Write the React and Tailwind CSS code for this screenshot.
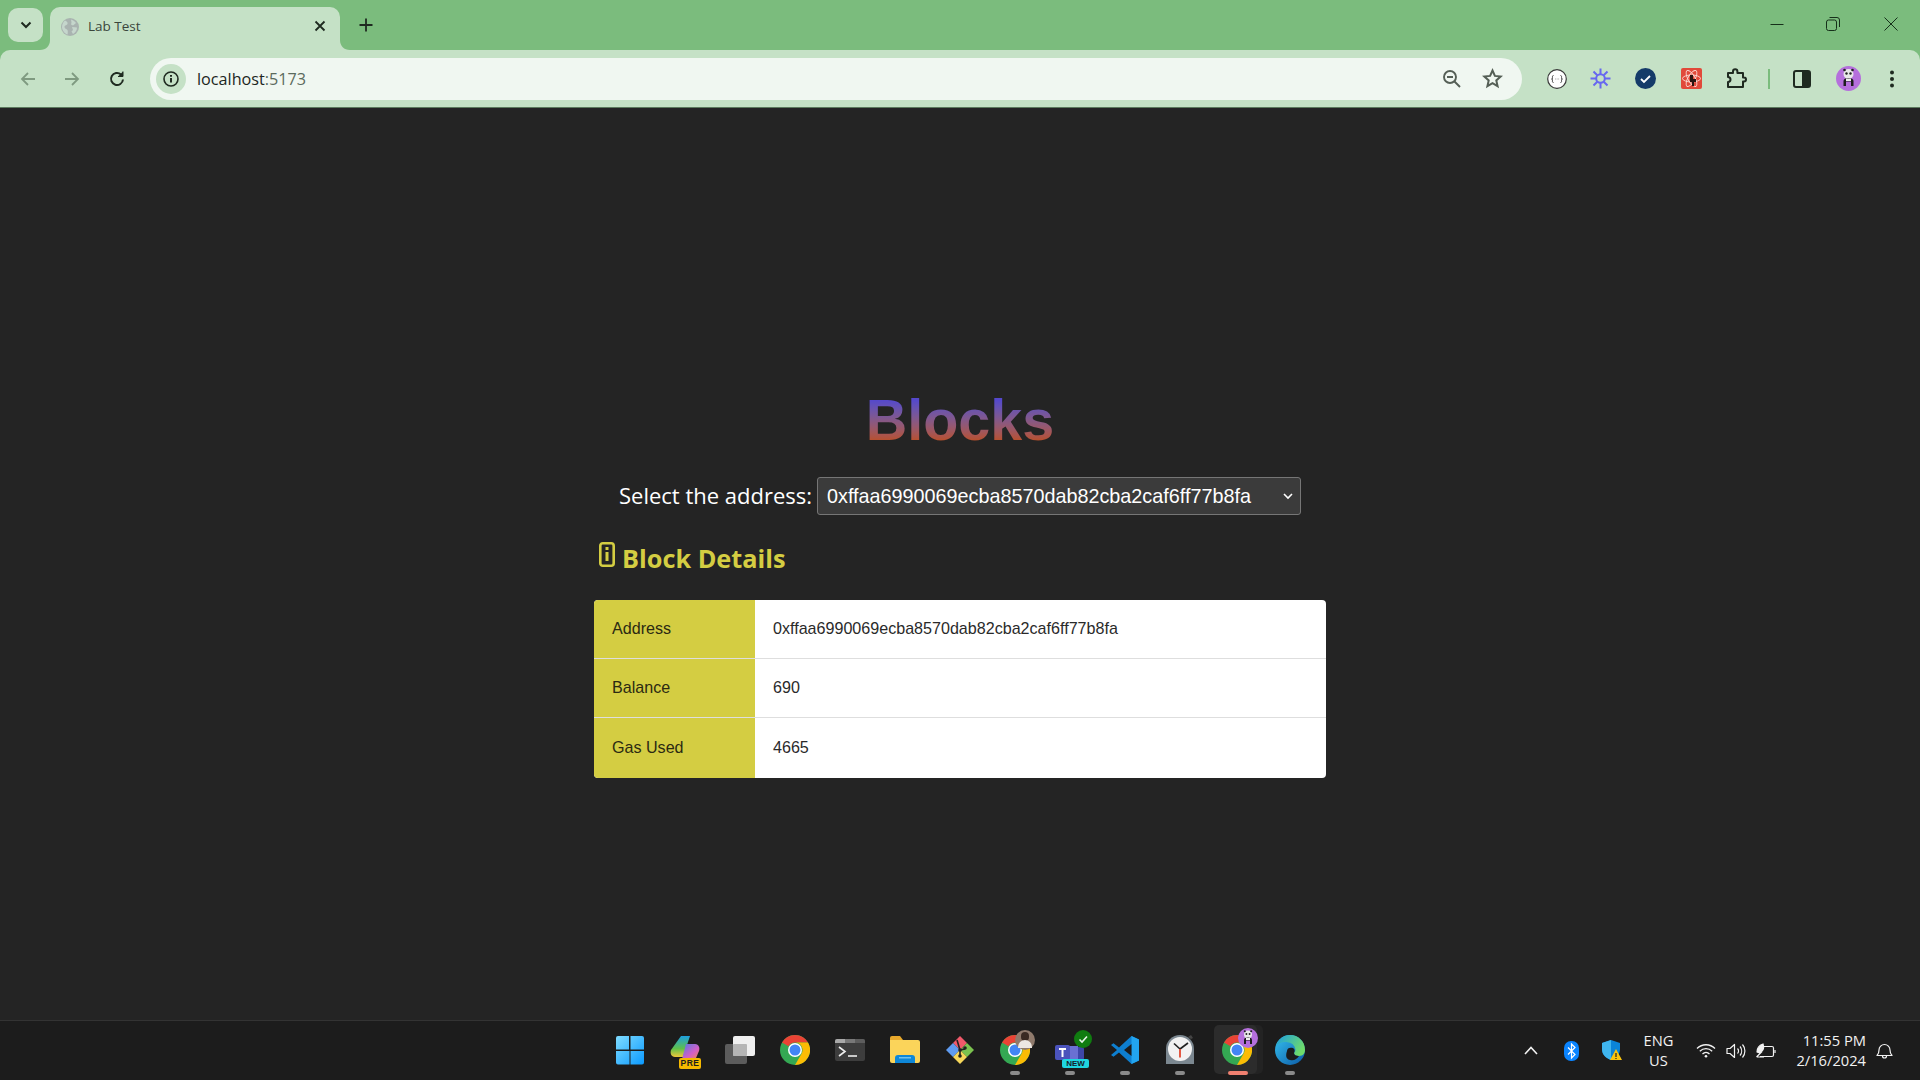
import React from "react";

const ui = "font-['Open_Sans','Noto_Sans',sans-serif]";

function Chevron({ className = "" }) {
  return (
    <svg width="14" height="14" viewBox="0 0 14 14" className={className} fill="none" stroke="#1f2a20" strokeWidth="2">
      <path d="M2.5 4.5 7 9l4.5-4.5" />
    </svg>
  );
}

function TabBar() {
  return (
    <div className="h-[50px] bg-[#7bbc7d] flex items-end relative">
      <div className="w-[35px] h-[34px] bg-[#c5e1c6] rounded-[10px] ml-2 mb-2 flex items-center justify-center">
        <Chevron />
      </div>
      <div className={`relative ml-[7px] w-[290px] h-[43px] bg-[#c5e1c6] rounded-t-[10px] flex items-center ${ui}`}>
        <svg width="18" height="18" viewBox="0 0 18 18" className="ml-[11px] mb-[3px]">
          <circle cx="9" cy="9" r="9" fill="#a9b3b0" />
          <path d="M4 2.5c2 1 3 2 2.5 3.5S3.800 7 3.500 8.500 5 11 6 11.500 7 14 6.500 16.500C4 15.800 1.500 13 1 9.500 1 6.500 2 4 4 2.500zM10 1.500c2.500 1 4 2 5 3.500l-3 2.500-2-1 .5-2zM11 9l5 .5c0 3-1.500 5-4 6.500l-1.500-2.500L12 12z" fill="#c5d6cc" />
        </svg>
        <span className="ml-[9px] mb-[4px] text-[13.500px] leading-none text-[#3a463b]">Lab Test</span>
        <svg width="12" height="12" viewBox="0 0 12 12" className="absolute left-[264px] top-[13px]" stroke="#1f2a20" strokeWidth="1.800">
          <path d="M1.500 1.500l9 9M10.500 1.500l-9 9" />
        </svg>
        <svg width="10" height="10" viewBox="0 0 10 10" className="absolute -left-[10px] bottom-0">
          <path d="M10 0v10H0C6 10 10 6 10 0z" fill="#c5e1c6" />
        </svg>
        <svg width="10" height="10" viewBox="0 0 10 10" className="absolute -right-[10px] bottom-0">
          <path d="M0 0v10h10C4 10 0 6 0 0z" fill="#c5e1c6" />
        </svg>
      </div>
      <svg width="14" height="14" viewBox="0 0 14 14" className="ml-[19px] mb-[18px]" stroke="#1f2a20" strokeWidth="1.800">
        <path d="M7 0.500v13M0.500 7h13" />
      </svg>
      <div className="absolute right-0 top-0 h-[50px] flex items-center">
        <svg width="14" height="14" viewBox="0 0 14 14" className="mr-[42px] mb-[2px]" stroke="#16301a" strokeWidth="1">
          <path d="M0.500 7.500h13" />
        </svg>
        <svg width="14" height="14" viewBox="0 0 14 14" fill="none" className="mr-[44px] mb-[2px]" stroke="#16301a" strokeWidth="1">
          <rect x="0.500" y="3" width="10" height="10.500" rx="2" />
          <path d="M3.500 0.500H11a2.500 2.500 0 0 1 2.500 2.500v7" />
        </svg>
        <svg width="14" height="14" viewBox="0 0 14 14" className="mr-[22px] mb-[2px]" stroke="#16301a" strokeWidth="1">
          <path d="M0.500 0.500l13 13M13.500 0.500l-13 13" />
        </svg>
      </div>
    </div>
  );
}

function ToolSlot({ w, children, className = "" }) {
  return <div className={`flex items-center justify-center shrink-0 ${className}`} style={{ width: w }}>{children}</div>;
}

function Panda({ size = 25 }) {
  return (
    <svg width={size} height={size} viewBox="0 0 25 25">
      <circle cx="12.500" cy="12.500" r="12.500" fill="#b56fdc" />
      <circle cx="12.500" cy="8" r="5" fill="#e8e8e8" />
      <circle cx="10.500" cy="7.500" r="1.200" fill="#222" />
      <circle cx="14.500" cy="7.500" r="1.200" fill="#222" />
      <circle cx="8.500" cy="4" r="1.300" fill="#222" />
      <circle cx="16.500" cy="4" r="1.300" fill="#222" />
      <path d="M7.500 20v-5c0-2 2-3 5-3s5 1 5 3v5h-2.500v-4.500h-5V20z" fill="#1d1d1d" />
      <rect x="10" y="12.500" width="5" height="2.500" fill="#eee" />
    </svg>
  );
}

function Toolbar() {
  return (
    <div className="bg-[#7bbc7d]">
      <div className="h-[57px] bg-[#c5e1c6] rounded-t-[10px] flex items-center">
        <ToolSlot w={56}>
          <svg width="16" height="16" viewBox="0 0 16 16" fill="none" stroke="#7f9a80" strokeWidth="1.800">
            <path d="M15 8H2M8 2 2 8l6 6" />
          </svg>
        </ToolSlot>
        <ToolSlot w={33} className="-ml-[1px]">
          <svg width="16" height="16" viewBox="0 0 16 16" fill="none" stroke="#7f9a80" strokeWidth="1.800">
            <path d="M1 8h13M8 2l6 6-6 6" />
          </svg>
        </ToolSlot>
        <ToolSlot w={46} className="ml-[6px]">
          <svg width="18" height="18" viewBox="0 0 18 18" fill="none" stroke="#1f2a20" strokeWidth="2">
            <path d="M15 9.500A6 6 0 1 1 13 4.500" />
            <path d="M15 1.500V6.500H10" fill="#1f2a20" strokeWidth="1" />
          </svg>
        </ToolSlot>
        <div className="ml-[10px] w-[1372px] h-[42px] bg-[#f0f7f1] rounded-full flex items-center">
          <div className="ml-[6px] w-[30px] h-[30px] rounded-full bg-[#c5e1c6] flex items-center justify-center">
            <svg width="16" height="16" viewBox="0 0 16 16" fill="none" stroke="#1f2a20" strokeWidth="1.600">
              <circle cx="8" cy="8" r="7" />
              <path d="M8 7v4.500" strokeWidth="2" />
              <path d="M8 4v1.800" strokeWidth="2" />
            </svg>
          </div>
          <span className={`ml-[11px] mt-[1px] text-[16.200px] leading-none text-[#1c261d] ${ui}`}>
            localhost<span className="text-[#5b6a5d]">:5173</span>
          </span>
          <div className="ml-auto flex items-center">
            <svg width="20" height="20" viewBox="0 0 20 20" fill="none" stroke="#555f56" strokeWidth="1.900" className="mr-[20px]">
              <circle cx="8" cy="8" r="6" />
              <path d="M5 8h6M12.500 12.500 18 18" />
            </svg>
            <svg width="21" height="21" viewBox="0 0 21 21" fill="none" stroke="#555f56" strokeWidth="2" className="mr-[19px]">
              <path d="M10.500 2.500l2.400 5.400 5.800.6-4.400 3.900 1.300 5.800-5.100-3-5.100 3 1.300-5.800-4.400-3.900 5.800-.6z" />
            </svg>
          </div>
        </div>
        <ToolSlot w={47} className="ml-[11px]">
          <svg width="20" height="20" viewBox="0 0 20 20">
            <circle cx="10" cy="10" r="9.300" fill="#fff" stroke="#3a3a3a" strokeWidth="1.200" />
            <path d="M6.500 6.500c-1.500 0-1 2-1 3s-1 .5-1 .5 1 0 1 1-.5 2.500 1 2.500M13.500 6.500c1.500 0 1 2 1 3s1 .5 1 .5-1 0-1 1 .5 2.500-1 2.500" fill="none" stroke="#444" strokeWidth="1" />
            <path d="M8 10h.8M9.700 10h.8M11.300 10h.8" stroke="#999" strokeWidth="1" />
          </svg>
        </ToolSlot>
        <ToolSlot w={41}>
          <svg width="21" height="21" viewBox="0 0 21 21" fill="none" stroke="#6767f0" strokeWidth="2">
            <circle cx="10.500" cy="10.500" r="4.300" />
            <path d="M10.500 0.500v5.500M10.500 15v5.500M0.500 10.500H6M15 10.500h5.500M3.500 3.500 7.300 7.300M13.700 13.700l3.800 3.800M17.500 3.500l-3.800 3.800M7.300 13.700l-3.800 3.800" />
          </svg>
        </ToolSlot>
        <ToolSlot w={48}>
          <svg width="21" height="21" viewBox="0 0 21 21">
            <circle cx="10.500" cy="10.500" r="10.500" fill="#153b69" />
            <path d="M6 11l3 3 6-6" fill="none" stroke="#fff" strokeWidth="1.800" />
          </svg>
        </ToolSlot>
        <ToolSlot w={44}>
          <svg width="21" height="21" viewBox="0 0 21 21">
            <rect width="21" height="21" rx="2" fill="#e1493a" />
            <g fill="none" stroke="#fbd9d3" strokeWidth="0.900">
              <ellipse cx="10.500" cy="10.500" rx="9" ry="3.500" />
              <ellipse cx="10.500" cy="10.500" rx="9" ry="3.500" transform="rotate(60 10.500 10.500)" />
              <ellipse cx="10.500" cy="10.500" rx="9" ry="3.500" transform="rotate(120 10.500 10.500)" />
            </g>
            <path d="M9 7h3v4h3v3h-2v4h-2v-4H9z" fill="#2a1512" />
          </svg>
        </ToolSlot>
        <ToolSlot w={47}>
          <svg width="21" height="21" viewBox="0 0 21 21" fill="none" stroke="#1f2a20" strokeWidth="2">
            <path d="M2 5h5V3.500a2.200 2.200 0 0 1 4.400 0V5H17v4.500h1a2 2 0 0 1 0 4h-1V19H2v-5a2.500 2.500 0 0 0 0-5z" strokeLinejoin="round" />
          </svg>
        </ToolSlot>
        <div className="w-[2px] h-[20px] bg-[#7bbc7d] ml-[8px]" />
        <ToolSlot w={64}>
          <svg width="18" height="18" viewBox="0 0 18 18">
            <rect x="1" y="1" width="16" height="16" rx="2" fill="none" stroke="#1f2a20" strokeWidth="2" />
            <rect x="9" y="1" width="8" height="16" fill="#1f2a20" />
          </svg>
        </ToolSlot>
        <ToolSlot w={28}><Panda /></ToolSlot>
        <ToolSlot w={16} className="ml-[22px]">
          <svg width="6" height="18" viewBox="0 0 6 18" fill="#1f2a20">
            <circle cx="3" cy="2.500" r="2" />
            <circle cx="3" cy="9" r="2" />
            <circle cx="3" cy="15.500" r="2" />
          </svg>
        </ToolSlot>
      </div>
      <div className="h-px bg-[#5c7a5e]" />
    </div>
  );
}

function Main() {
  const rows = [
    ["Address", "0xffaa6990069ecba8570dab82cba2caf6ff77b8fa"],
    ["Balance", "690"],
    ["Gas Used", "4665"],
  ];
  const address = "0xffaa6990069ecba8570dab82cba2caf6ff77b8fa";
  return (
    <main className="flex-1 bg-[#242424] flex flex-col items-center pt-[279px]">
      <h1 className="text-[57.500px] leading-[66px] font-bold font-['Liberation_Sans',Arial,sans-serif] bg-linear-to-b from-[#5548cc] from-[20%] to-[#b94f26] to-[82%] bg-clip-text text-transparent">
        Blocks
      </h1>
      <div className="mt-[24px] flex items-center h-[38px]">
        <label className={`text-[22px] text-white leading-none mr-[5px] mb-[3px] ${ui}`}>Select the address:</label>
        <div className="relative w-[484px] h-[38px]">
          <select
            defaultValue={address}
            className="appearance-none w-full h-full pl-[9px] pr-[24px] pt-[1px] text-[19.800px] text-white bg-[#3b3b3b] border border-[#767676] rounded-[3px] font-['Liberation_Sans',Arial,sans-serif]"
          >
            <option value={address}>{address}</option>
          </select>
          <svg width="10" height="7" viewBox="0 0 10 7" fill="none" stroke="#fff" strokeWidth="1.600" className="absolute right-[8px] top-[16px] pointer-events-none">
            <path d="M1 1l4 4 4-4" />
          </svg>
        </div>
      </div>
      <div className="w-[732px] mt-[27px] h-[30px] flex items-start pl-[5px]">
        <svg width="16" height="25" viewBox="0 0 16 25" className="shrink-0">
          <rect x="1.300" y="1.300" width="13.400" height="22.400" rx="2.500" fill="none" stroke="#d4cd42" strokeWidth="2.600" />
          <rect x="6.500" y="5" width="3" height="3" fill="#d4cd42" />
          <rect x="6.500" y="10" width="3" height="9" fill="#d4cd42" />
        </svg>
        <h2 className={`ml-[7px] mt-[-2px] text-[25.300px] leading-[36px] font-bold text-[#d4cd42] ${ui}`}>Block Details</h2>
      </div>
      <div className="w-[732px] mt-[28px] rounded-[4px] overflow-hidden bg-white font-['Liberation_Sans',Arial,sans-serif] text-[16.100px]">
        {rows.map(([k, v], i) => (
          <div key={k} className={`flex ${i < 2 ? "h-[59px] border-b border-[#dedede]" : "h-[60px]"}`}>
            <div className="w-[161px] bg-[#d4cd42] pl-[18px] pb-[2px] flex items-center text-[#2b2a12]">{k}</div>
            <div className="flex-1 pl-[18px] pb-[2px] flex items-center text-[#2a2a2a]">{v}</div>
          </div>
        ))}
      </div>
    </main>
  );
}

function Chrome({ badge }) {
  return (
    <div className="relative w-[30px] h-[30px]">
      <svg width="30" height="30" viewBox="0 0 30 30">
        <circle cx="15" cy="15" r="15" fill="#34a853" />
        <path d="M15 0a15 15 0 0 1 13 7.500H15a7.500 7.500 0 0 0-6.500 3.750L2 7.500A15 15 0 0 1 15 0z" fill="#ea4335" />
        <path d="M28 7.500A15 15 0 0 1 15 30l6.500-11.250A7.500 7.500 0 0 0 15 7.500z" fill="#fbbc04" />
        <circle cx="15" cy="15" r="7" fill="#fff" />
        <circle cx="15" cy="15" r="5.500" fill="#4285f4" />
      </svg>
      {badge}
    </div>
  );
}

function Slot({ children, under }) {
  return (
    <div className="relative w-[55px] h-full flex items-center justify-center pb-[2px]">
      {children}
      {under}
    </div>
  );
}

function Taskbar() {
  const dot = <div className="absolute bottom-[5px] w-[10px] h-[4px] rounded-full bg-[#8a8a8a]" />;
  return (
    <footer className="h-[60px] bg-[#1c1c1c] border-t border-[#333] grid grid-cols-[1fr_auto_1fr] items-center">
      <div />
      <div className="flex items-center h-full">
        <Slot>
          <svg width="30" height="30" viewBox="0 0 30 30">
            <defs>
              <linearGradient id="win" x1="0" y1="0" x2="1" y2="1">
                <stop offset="0" stopColor="#7fdcff" />
                <stop offset="1" stopColor="#0b9aff" />
              </linearGradient>
            </defs>
            <path d="M1 3a2 2 0 0 1 2-2h11v13.500H1zM15.500 1H27a2 2 0 0 1 2 2v11.500H15.500zM1 16h13.500v13.500H3a2 2 0 0 1-2-2zM15.500 16H29v11.500a2 2 0 0 1-2 2H15.500z" fill="url(#win)" />
          </svg>
        </Slot>
        <Slot>
          <div className="relative w-[30px] h-[30px]">
            <svg width="30" height="26" viewBox="0 0 30 26">
              <defs>
                <linearGradient id="cpa" x1="0" y1="0" x2="0" y2="1">
                  <stop offset="0" stopColor="#1d9fe0" />
                  <stop offset="0.600" stopColor="#5fc04a" />
                  <stop offset="1" stopColor="#f0c93a" />
                </linearGradient>
                <linearGradient id="cpb" x1="0" y1="0" x2="1" y2="1">
                  <stop offset="0" stopColor="#4d7de0" />
                  <stop offset="0.600" stopColor="#d35ec8" />
                  <stop offset="1" stopColor="#f08a4a" />
                </linearGradient>
              </defs>
              <path d="M11 1h9L13 22H5C1 22 0 18 1 15z" fill="url(#cpa)" />
              <path d="M16 9h9c4 0 5 4 4 7l-3 7c-1 1-2 1-3 1h-11z" fill="url(#cpb)" />
            </svg>
            <div className="absolute right-[-1px] bottom-[-4px] h-[11px] w-[22px] rounded-[2px] bg-[#f5b800] text-[8.500px] font-bold text-[#1c1c1c] leading-[11px] text-center font-['Liberation_Sans',sans-serif] tracking-wider">PRE</div>
          </div>
        </Slot>
        <Slot>
          <div className="relative w-[30px] h-[28px]">
            <div className="absolute left-0 bottom-0 w-[22px] h-[20px] rounded-[2px] bg-[#5c5c5c]" />
            <div className="absolute right-0 top-0 w-[22px] h-[20px] rounded-[2px] bg-[#efefef]" />
            <div className="absolute left-[8px] top-[8px] w-[14px] h-[12px] rounded-[1px] bg-[#b5b5b5]" />
          </div>
        </Slot>
        <Slot><Chrome /></Slot>
        <Slot>
          <svg width="30" height="22" viewBox="0 0 30 22">
            <rect width="30" height="22" rx="2" fill="#3d3d3d" />
            <path d="M0 2a2 2 0 0 1 2-2h8v4H0z" fill="#a8a8a8" />
            <rect x="10" width="10" height="4" fill="#787878" />
            <path d="M20 0h8a2 2 0 0 1 2 2v2H20z" fill="#5d5d5d" />
            <path d="M4 8l6 4.500L4 17" fill="none" stroke="#eee" strokeWidth="1.600" />
            <path d="M13 17h9" stroke="#eee" strokeWidth="1.600" />
          </svg>
        </Slot>
        <Slot>
          <svg width="30" height="27" viewBox="0 0 30 27">
            <path d="M0 2a2 2 0 0 1 2-2h8l3 4H0z" fill="#e8a92c" />
            <path d="M0 4h28a2 2 0 0 1 2 2v19a2 2 0 0 1-2 2H2a2 2 0 0 1-2-2z" fill="#fbd45a" />
            <path d="M5 22a3 3 0 0 1 3-3h14a3 3 0 0 1 3 3v5H5z" fill="#0e87d8" />
            <rect x="9" y="21" width="12" height="1.500" fill="#6ec1f0" />
          </svg>
        </Slot>
        <Slot>
          <svg width="30" height="30" viewBox="0 0 30 30">
            <path d="M15 1l7 7-7 7-7-7z" fill="#f0596a" />
            <path d="M8 8l7 7-7 7-7-7z" fill="#5f9bf0" />
            <path d="M22 8l7 7-7 7-7-7z" fill="#7bc24f" />
            <path d="M15 15l7 7-7 7-7-7z" fill="#f7d75a" />
            <path d="M12 5l3 10 5-1M15 15v6" fill="none" stroke="#222" strokeWidth="1.600" />
            <circle cx="15" cy="15" r="1.800" fill="#222" />
            <circle cx="15" cy="21" r="1.800" fill="#222" />
            <circle cx="20" cy="13" r="1.800" fill="#222" />
          </svg>
        </Slot>
        <Slot under={dot}>
          <Chrome
            badge={
              <div className="absolute -top-[5px] -right-[5px] w-[20px] h-[20px] rounded-full bg-[#8f7a6c] flex items-center justify-center">
                <div className="relative w-[14px] h-[16px]">
                  <div className="absolute left-[3px] top-0 w-[8px] h-[9px] rounded-full bg-[#3a2a22]" />
                  <div className="absolute left-0 bottom-0 w-[14px] h-[8px] rounded-t-full bg-[#ece7e2]" />
                </div>
              </div>
            }
          />
        </Slot>
        <Slot under={dot}>
          <div className="relative w-[30px] h-[30px]">
            <svg width="30" height="28" viewBox="0 0 30 28" className="mt-[6px]">
              <path d="M19 6h8a2 2 0 0 1 2 2v9a5 5 0 0 1-5 5h-5z" fill="#3e46a8" />
              <path d="M7 5h16v13a6 6 0 0 1-6 6h-4a6 6 0 0 1-6-6z" fill="#6a70d3" />
              <rect x="0" y="4" width="15" height="15" rx="2" fill="#4b53bc" />
              <path d="M4 8h7M7.500 8v8" stroke="#fff" strokeWidth="2" />
            </svg>
            <div className="absolute -top-[5px] -right-[7px] w-[18px] h-[18px] rounded-full bg-[#107c10] flex items-center justify-center">
              <svg width="10" height="10" viewBox="0 0 10 10" fill="none" stroke="#e8f4e8" strokeWidth="1.600">
                <path d="M1.500 5.500l2.500 2.500 5-5.500" />
              </svg>
            </div>
            <div className="absolute left-[7px] bottom-[-3px] w-[27px] h-[9px] rounded-[2px] bg-[#1fd6e0] text-[8px] font-bold text-[#14202a] leading-[9px] text-center font-['Liberation_Sans',sans-serif]">NEW</div>
          </div>
        </Slot>
        <Slot under={dot}>
          <svg width="30" height="30" viewBox="0 0 30 30">
            <path d="M21.500 1 29 4.500v21L21.500 29 9 17.500l-5.500 4.200L1 20l6-5-6-5 2.500-1.700L9 12.500z" fill="#0e7fd0" />
            <path d="M21.500 1 29 4.500v21L21.500 29z" fill="#22a5f0" />
            <path d="M21.500 9 14 15l7.500 6z" fill="#1c1c1c" />
          </svg>
        </Slot>
        <Slot under={dot}>
          <svg width="30" height="32" viewBox="0 0 30 32">
            <path d="M1 30V15a14 14 0 0 1 28 0v15z" fill="#7b8790" />
            <path d="M23 3l3-2 2 3-2 1z" fill="#444" />
            <circle cx="15" cy="15" r="12" fill="#f2f2f2" />
            <path d="M15 15 9 9.500" stroke="#222" strokeWidth="1.600" />
            <path d="M15 15l8-6" stroke="#222" strokeWidth="1.600" />
            <path d="M15 15v8.500" stroke="#e2472f" strokeWidth="1.800" />
          </svg>
        </Slot>
        <div className="relative w-[55px] h-full flex items-center justify-center">
          <div className="absolute left-[10px] top-[4px] h-[49px] w-[45px] rounded-[5px] bg-[#232323]" />
          <div className="absolute left-[6px] top-[4px] h-[49px] w-[43px] rounded-[5px] bg-[#2c2c2c]" />
          <div className="relative ml-[3px] mt-[-1px]">
            <Chrome
              badge={
                <div className="absolute -top-[7px] -right-[6px]"><Panda size={20} /></div>
              }
            />
          </div>
          <div className="absolute left-[20px] bottom-[5px] w-[20px] h-[4px] rounded-full bg-[#f08070]" />
        </div>
        <Slot under={dot}>
          <svg width="30" height="30" viewBox="0 0 30 30">
            <defs>
              <linearGradient id="edge1" x1="0" y1="0" x2="1" y2="1">
                <stop offset="0" stopColor="#35c1f1" />
                <stop offset="1" stopColor="#0c59a4" />
              </linearGradient>
              <linearGradient id="edge2" x1="0" y1="0" x2="1" y2="0.500">
                <stop offset="0" stopColor="#1b9de2" />
                <stop offset="1" stopColor="#6fdc6a" />
              </linearGradient>
            </defs>
            <circle cx="15" cy="15" r="15" fill="url(#edge1)" />
            <path d="M1 11C3 4 9 0 15 0c8 0 15 6 15 15 0 3-2 6-6 6-3 0-5-1-5-3 1-1 2-3 1-5-1-4-5-6-10-6C6 7 3 9 1 11z" fill="url(#edge2)" />
            <path d="M12 16c0-3 3-4 6-3 2 1 2 3 1 5 0 2 2 3 5 3-2 3-5 5-9 4-5-1-4-6-3-9z" fill="#1c1c1c" />
          </svg>
        </Slot>
      </div>
      <div className={`flex items-center h-full text-[#f2f2f2] ${ui}`}>
        <svg width="14" height="9" viewBox="0 0 14 9" fill="none" stroke="#f2f2f2" strokeWidth="1.600" className="ml-[206px]">
          <path d="M1 8l6-6.500L13 8" />
        </svg>
        <svg width="16" height="20" viewBox="0 0 16 20" className="ml-[26px]">
          <rect width="15" height="20" rx="7" fill="#0a84ff" />
          <path d="M4 6.500l7 7-3.500 3.500V3l3.500 3.500-7 7" fill="none" stroke="#fff" strokeWidth="1.200" />
        </svg>
        <svg width="20" height="21" viewBox="0 0 20 21" className="ml-[22px]">
          <path d="M9 0l9 3v6c0 6-4 9-9 11-5-2-9-5-9-11V3z" fill="#0a84d8" />
          <path d="M9 0v20C4 18 0 15 0 9V3z" fill="#3fb5ee" />
          <path d="M14 9l6 11H8z" fill="#fbc50c" />
          <path d="M14 13v4M14 18v1" stroke="#222" strokeWidth="1.200" />
        </svg>
        <div className="ml-[17px] mb-[2px] w-[40px] text-center text-[14.700px] leading-[20px]">ENG<br />US</div>
        <svg width="20" height="15" viewBox="0 0 20 15" fill="none" stroke="#f2f2f2" strokeWidth="1.300" className="ml-[17px]">
          <path d="M1 5.500c5-5 13-5 18 0M3.800 8.200c3.500-3.500 8.900-3.500 12.400 0M6.500 11c2-2 5-2 7 0" />
          <circle cx="10" cy="13.300" r="1.300" fill="#f2f2f2" stroke="none" />
        </svg>
        <svg width="20" height="16" viewBox="0 0 20 16" fill="none" stroke="#f2f2f2" strokeWidth="1.200" className="ml-[10px]">
          <path d="M1 5.500h3L8.500 1.500v13L4 10.500H1z" strokeLinejoin="round" />
          <path d="M11.500 5.500a3.500 3.500 0 0 1 0 5M14 3.500a7 7 0 0 1 0 9M16.500 1.500a10 10 0 0 1 0 13" />
        </svg>
        <svg width="20" height="16" viewBox="0 0 20 16" fill="none" stroke="#f2f2f2" strokeWidth="1.200" className="ml-[10px]">
          <path d="M4 3.500H16a1.500 1.500 0 0 1 1.500 1.500v7a1.500 1.500 0 0 1-1.500 1.500H4" />
          <path d="M19 7v3" />
          <path d="M1 9c0-4 3-7 6-8 1 3 1 6-2 8-1 .700-3 .500-4 0zM0.500 14 6 8.500M8 14H1" fill="#f2f2f2" />
        </svg>
        <div className="ml-auto mb-[2px] text-right text-[14.700px] leading-[20px] whitespace-nowrap">11:55 PM<br />2/16/2024</div>
        <svg width="17" height="18" viewBox="0 0 17 18" fill="none" stroke="#f2f2f2" strokeWidth="1.200" className="ml-[10px] mr-[27px]">
          <path d="M1 13.500c1.500-1.500 2-2.500 2-5.500a5.500 5.500 0 0 1 11 0c0 3 .5 4 2 5.500zM6.500 14a2 2 0 0 0 4 0" strokeLinejoin="round" />
        </svg>
      </div>
    </footer>
  );
}

export default function App() {
  return (
    <div className="h-screen w-full overflow-hidden flex flex-col bg-[#242424]">
      <TabBar />
      <Toolbar />
      <Main />
      <Taskbar />
    </div>
  );
}
